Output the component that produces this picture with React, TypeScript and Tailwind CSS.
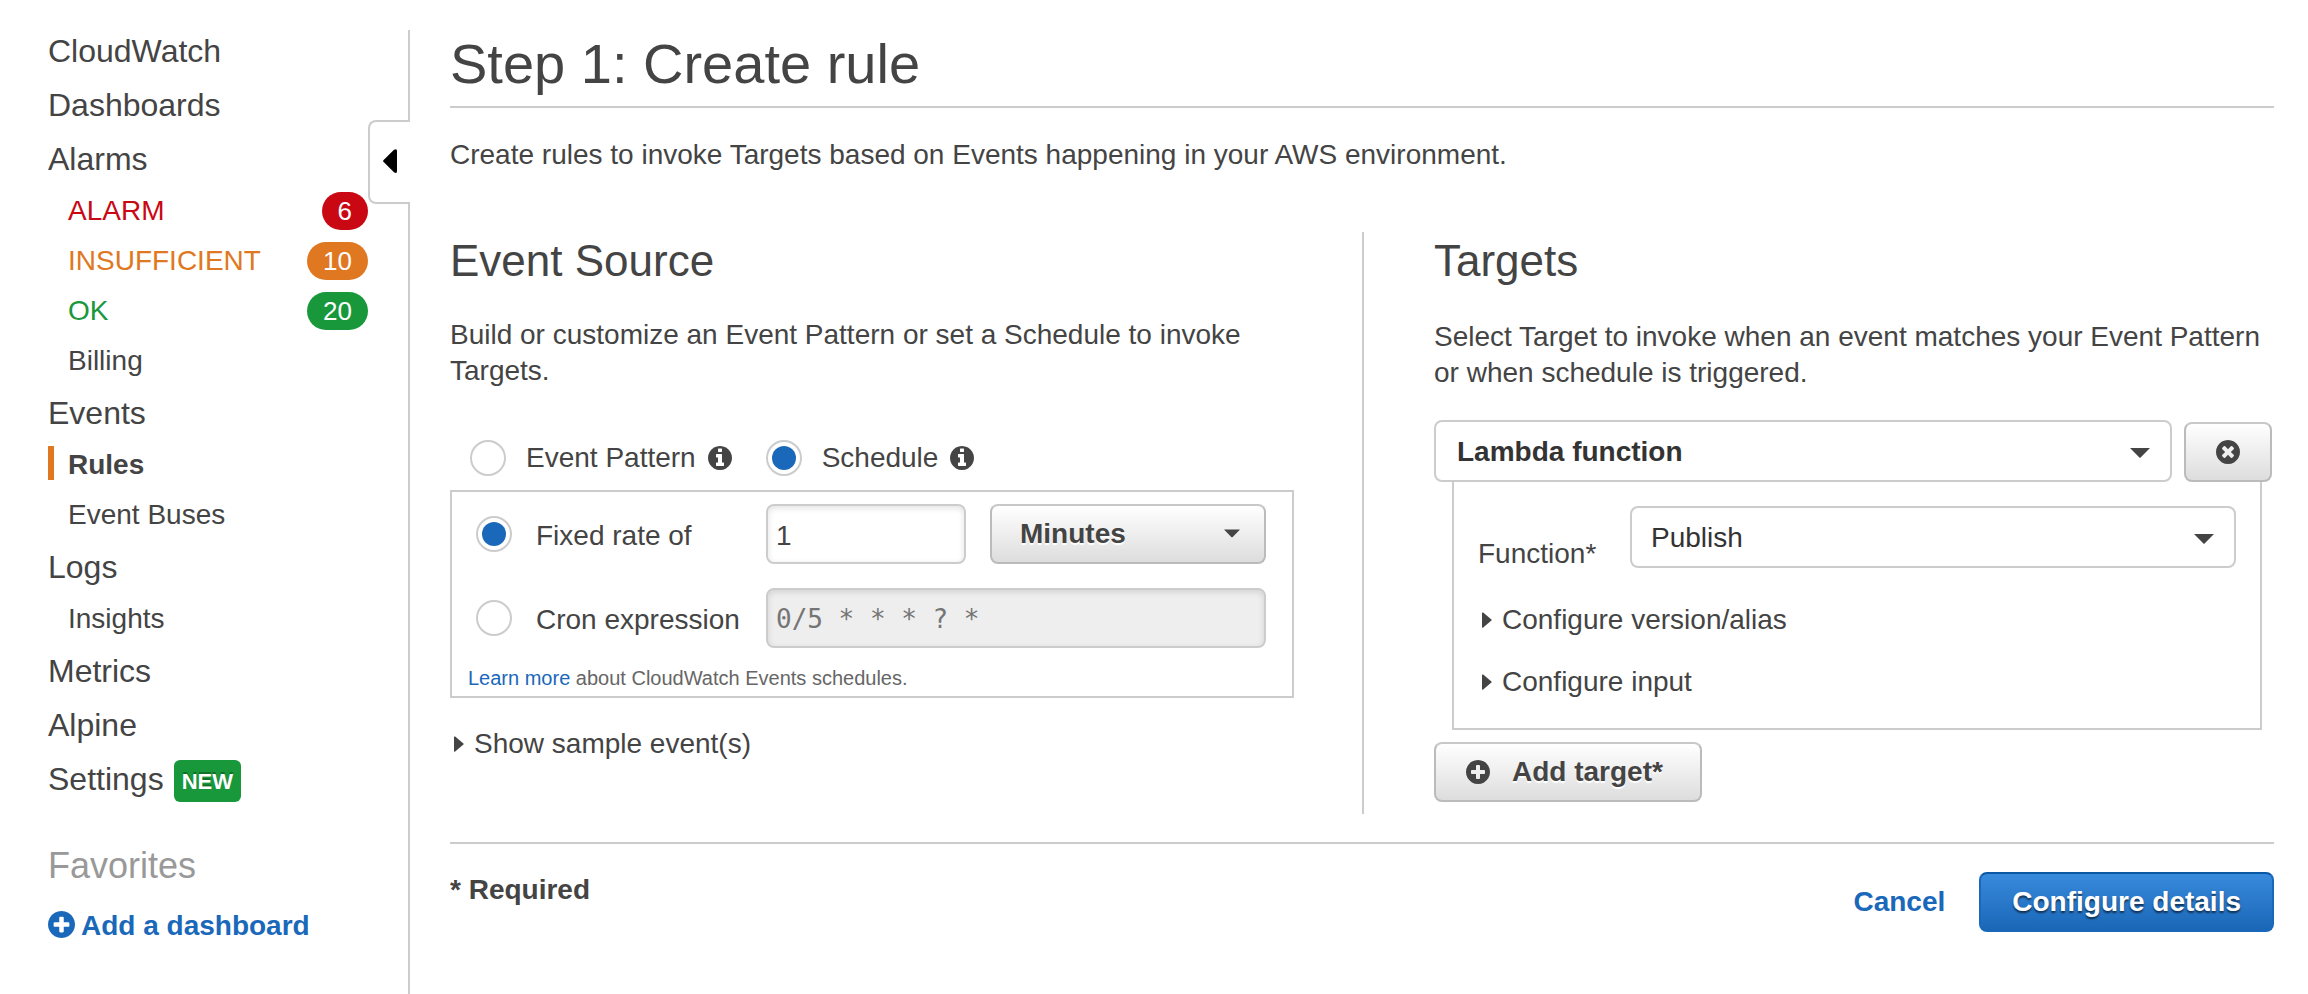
import React from "react";

const CIRCLE =
  "m0 0M1664 896q0 209-103 385.5t-279.5 279.5-385.5 103-385.5-103-279.5-279.5-103-385.5 103-385.5 279.5-279.5 385.5-103 385.5 103 279.5 279.5 103 385.5z";
const PLUS =
  "M1344 960v-128q0-26-19-45t-45-19h-256v-256q0-26-19-45t-45-19h-128q-26 0-45 19t-19 45v256h-256q-26 0-45 19t-19 45v128q0 26 19 45t45 19h256v256q0 26 19 45t45 19h128q26 0 45-19t19-45v-256h256q26 0 45-19t19-45z";
const TIMES =
  "M1277 1122q0-26-19-45l-181-181 181-181q19-19 19-45 0-27-19-46l-90-90q-19-19-46-19-26 0-45 19l-181 181-181-181q-19-19-45-19-27 0-46 19l-90 90q-19 19-19 46 0 26 19 45l181 181-181 181q-19 19-19 45 0 27 19 46l90 90q19 19 46 19 26 0 45-19l181-181 181 181q19 19 45 19 27 0 46-19l90-90q19-19 19-46z";
const INFO =
  "M1152 1376v-160q0-14-9-23t-23-9h-96v-512q0-14-9-23t-23-9h-320q-14 0-23 9t-9 23v160q0 14 9 23t23 9h96v320h-96q-14 0-23 9t-9 23v160q0 14 9 23t23 9h448q14 0 23-9t9-23zM1024 480v-160q0-14-9-23t-23-9h-192q-14 0-23 9t-9 23v160q0 14 9 23t23 9h192q14 0 23-9t9-23z";

function CircleIcon({ glyph, className = "size-6" }: { glyph: string; className?: string }) {
  return (
    <svg viewBox="128 128 1536 1536" fill="currentColor" fillRule="evenodd" className={`shrink-0 ${className}`} aria-hidden="true">
      <path d={glyph + CIRCLE} />
    </svg>
  );
}

function Disclosure({ children }: { children: React.ReactNode }) {
  return (
    <button type="button" className="flex items-center gap-[10px] pl-1 text-left">
      <svg viewBox="0 0 10 16" className="h-4 w-[10px]" fill="currentColor" aria-hidden="true">
        <path d="M0 1Q0 0 1.2.6L9.4 7.4Q10 8 9.4 8.6L1.2 15.4Q0 16 0 15Z" />
      </svg>
      {children}
    </button>
  );
}

const radioClass =
  "size-9 shrink-0 appearance-none rounded-full border-2 border-[#ccc] bg-white bg-clip-content p-1 checked:bg-[#1a68ba]";
const greyButton =
  "rounded-lg border-2 border-[#bbb] border-t-[#c8c8c8] bg-linear-to-b from-white to-[#ddd] font-bold text-[#444] text-shadow-[0_2px_1px_#fff]";

function Caret({ className }: { className: string }) {
  return (
    <svg viewBox="0 0 20 10" fill="#444" className={`pointer-events-none absolute ${className}`} aria-hidden="true">
      <path d="M0 0H20L10.600 9.600Q10 10 9.400 9.600Z" />
    </svg>
  );
}

function NavTop({ children }: { children: React.ReactNode }) {
  return (
    <a href="#" className="flex h-[54px] items-center gap-[10px] text-[32px] leading-9">
      {children}
    </a>
  );
}

function NavSub({ children, className = "" }: { children: React.ReactNode; className?: string }) {
  return (
    <a href="#" className={`flex h-[50px] items-center justify-between pl-5 ${className}`}>
      {children}
    </a>
  );
}

function Count({ children, className }: { children: React.ReactNode; className: string }) {
  return (
    <span className={`flex h-[38px] items-center rounded-full px-4 text-[26px] text-white ${className}`}>{children}</span>
  );
}

export default function App() {
  return (
    <div className="flex min-h-screen bg-white font-['Liberation_Sans',Arial,sans-serif] text-[28px] leading-9 text-[#444]">
      <nav aria-label="CloudWatch" className="w-[368px] shrink-0 pt-6 pl-12">
        <NavTop>CloudWatch</NavTop>
        <NavTop>Dashboards</NavTop>
        <NavTop>Alarms</NavTop>
        <NavSub className="text-[#c90813]">
          ALARM<Count className="bg-[#c90813]">6</Count>
        </NavSub>
        <NavSub className="text-[#df7821]">
          INSUFFICIENT<Count className="bg-[#df7821]">10</Count>
        </NavSub>
        <NavSub className="text-[#18983b]">
          OK<Count className="bg-[#18983b]">20</Count>
        </NavSub>
        <NavSub>Billing</NavSub>
        <NavTop>Events</NavTop>
        <a href="#" aria-current="page" className="flex h-[50px] items-center gap-[14px] font-bold">
          <span className="mb-1 h-[34px] w-[6px] bg-[#df7821]" />
          Rules
        </a>
        <NavSub>Event Buses</NavSub>
        <NavTop>Logs</NavTop>
        <NavSub>Insights</NavSub>
        <NavTop>Metrics</NavTop>
        <NavTop>Alpine</NavTop>
        <NavTop>
          Settings
          <span className="mt-1 flex h-[42px] items-center rounded-md bg-[#18983b] px-2 pt-[2px] text-[22px] font-bold text-white text-shadow-[0_-2px_0_#0f7029]">
            NEW
          </span>
        </NavTop>
        <h2 className="mt-[33px] mb-2 flex h-[54px] items-center text-[36px] text-[#999]">Favorites</h2>
        <a href="#" className="flex h-[50px] items-center gap-[6px] font-bold text-[#1a68ba]">
          <CircleIcon glyph={PLUS} className="mb-1 size-[27px]" />
          Add a dashboard
        </a>
      </nav>

      <div className="flex w-[42px] shrink-0 flex-col pt-[30px]">
        <div className="h-[90px] border-r-2 border-[#ccc]" />
        <button
          type="button"
          aria-label="Collapse navigation"
          className="flex h-[84px] items-center rounded-l-lg border-2 border-r-0 border-[#ccc] pb-[2px] pl-[13px]"
        >
          <svg viewBox="0 0 14 24" className="h-6 w-[14px]" aria-hidden="true">
            <path d="M.4 11.200L11 .8Q14-1 14 2V22Q14 25 11 23.200L.4 12.800Q-.2 12 .4 11.200Z" fill="#000" />
          </svg>
        </button>
        <div className="flex-1 border-r-2 border-[#ccc]" />
      </div>

      <main className="min-w-0 flex-1 pt-8 pr-[34px] pb-10 pl-10">
        <h1 className="border-b-2 border-[#ccc] pb-[10px] text-[56px] leading-[64px]">Step 1: Create rule</h1>
        <p className="mt-[29px]">Create rules to invoke Targets based on Events happening in your AWS environment.</p>

        <div className="mt-[59px] grid grid-cols-2">
          <section className="pt-px pr-[68px]">
            <h2 className="text-[44px] leading-[56px]">Event Source</h2>
            <p className="mt-7">Build or customize an Event Pattern or set a Schedule to invoke Targets.</p>

            <div className="mt-[51px] flex items-center gap-[34px] pl-5">
              <div className="flex items-center gap-3">
                <label className="flex items-center gap-5">
                  <input type="radio" name="source" className={radioClass} />
                  Event Pattern
                </label>
                <CircleIcon glyph={INFO} />
              </div>
              <div className="flex items-center gap-3">
                <label className="flex items-center gap-5">
                  <input type="radio" name="source" defaultChecked className={radioClass} />
                  Schedule
                </label>
                <CircleIcon glyph={INFO} />
              </div>
            </div>

            <div className="mt-[14px] border-2 border-[#ccc] px-4 pt-3 pb-1">
              <div className="flex flex-col gap-6 pr-[10px] pl-2">
                <div className="flex items-center">
                  <label className="flex w-[290px] shrink-0 items-center gap-6">
                    <input type="radio" name="schedule" defaultChecked className={radioClass} />
                    <span className="pt-1">Fixed rate of</span>
                  </label>
                  <input
                    type="text"
                    aria-label="Rate"
                    defaultValue="1"
                    className="mr-6 h-[60px] w-[200px] shrink-0 rounded-lg border-2 border-[#ccc] px-2 pt-1 shadow-[inset_0_2px_6px_rgba(0,0,0,0.12)]"
                  />
                  <div className="relative min-w-0 flex-1">
                    <select aria-label="Rate unit" className={`h-[60px] w-full appearance-none pl-7 ${greyButton}`}>
                      <option>Minutes</option>
                    </select>
                    <Caret className="top-[25px] right-[26px] h-[9px] w-4" />
                  </div>
                </div>
                <div className="flex items-center">
                  <label className="flex w-[290px] shrink-0 items-center gap-6">
                    <input type="radio" name="schedule" className={radioClass} />
                    <span className="pt-1">Cron expression</span>
                  </label>
                  <input
                    type="text"
                    aria-label="Cron expression"
                    defaultValue="0/5 * * * ? *"
                    disabled
                    className="h-[60px] min-w-0 flex-1 rounded-lg border-2 border-[#ccc] bg-[#eee] px-2 pt-[2px] font-['DejaVu_Sans_Mono',monospace] text-[26px] text-[#757575] shadow-[inset_0_2px_6px_rgba(0,0,0,0.12)]"
                  />
                </div>
              </div>
              <p className="mt-4 text-[20px] leading-7 text-[#666]">
                <a href="#" className="text-[#1a68ba]">
                  Learn more
                </a>{" "}
                about CloudWatch Events schedules.
              </p>
            </div>
            <div className="mt-7">
              <Disclosure>Show sample event(s)</Disclosure>
            </div>
          </section>

          <section className="border-l-2 border-[#ccc] pt-px pb-3 pl-[70px]">
            <h2 className="text-[44px] leading-[56px]">Targets</h2>
            <p className="mt-[30px]">
              Select Target to invoke when an event matches your Event Pattern or when schedule is triggered.
            </p>

            <div className="mt-[29px] flex items-end gap-3 pr-[2px]">
              <div className="relative min-w-0 flex-1">
                <select
                  aria-label="Target type"
                  className="block h-[62px] w-full appearance-none rounded-lg border-2 border-[#ccc] bg-white pt-[2px] pl-[21px] font-bold text-[#333]"
                >
                  <option>Lambda function</option>
                </select>
                <Caret className="top-7 right-[22px] h-[10px] w-5" />
              </div>
              <button
                type="button"
                aria-label="Remove target"
                className={`flex h-[60px] w-[88px] shrink-0 items-center justify-center ${greyButton}`}
              >
                <CircleIcon glyph={TIMES} />
              </button>
            </div>

            <div className="mr-3 ml-[18px] border-2 border-t-0 border-[#ccc] px-6 pt-6 pb-7">
              <div className="flex items-end">
                <label htmlFor="fn" className="w-[152px] shrink-0">
                  Function*
                </label>
                <div className="relative mb-1 min-w-0 flex-1">
                  <select
                    id="fn"
                    className="block h-[62px] w-full appearance-none rounded-lg border-2 border-[#ccc] bg-white pt-[2px] pl-[19px] text-[#333]"
                  >
                    <option>Publish</option>
                  </select>
                  <Caret className="top-7 right-[22px] h-[10px] w-5" />
                </div>
              </div>
              <div className="mt-[30px] flex flex-col items-start gap-[26px]">
                <Disclosure>Configure version/alias</Disclosure>
                <Disclosure>Configure input</Disclosure>
              </div>
            </div>

            <button type="button" className={`mt-3 flex h-[60px] min-w-[268px] items-center gap-[22px] px-[30px] ${greyButton}`}>
              <CircleIcon glyph={PLUS} />
              Add target*
            </button>
          </section>
        </div>

        <footer className="mt-7 flex items-start justify-between border-t-2 border-[#ccc] pt-7 font-bold">
          <span>* Required</span>
          <div className="flex items-center gap-[34px]">
            <a href="#" className="text-[#1a68ba]">
              Cancel
            </a>
            <button
              type="button"
              className="h-[60px] rounded-lg border-2 border-[#1a68ba] border-t-[#0a57a4] bg-linear-to-b from-[#388add] to-[#1a67b7] px-[31px] text-white text-shadow-[0_2px_2px_rgba(0,0,0,0.6)]"
            >
              Configure details
            </button>
          </div>
        </footer>
      </main>
    </div>
  );
}
